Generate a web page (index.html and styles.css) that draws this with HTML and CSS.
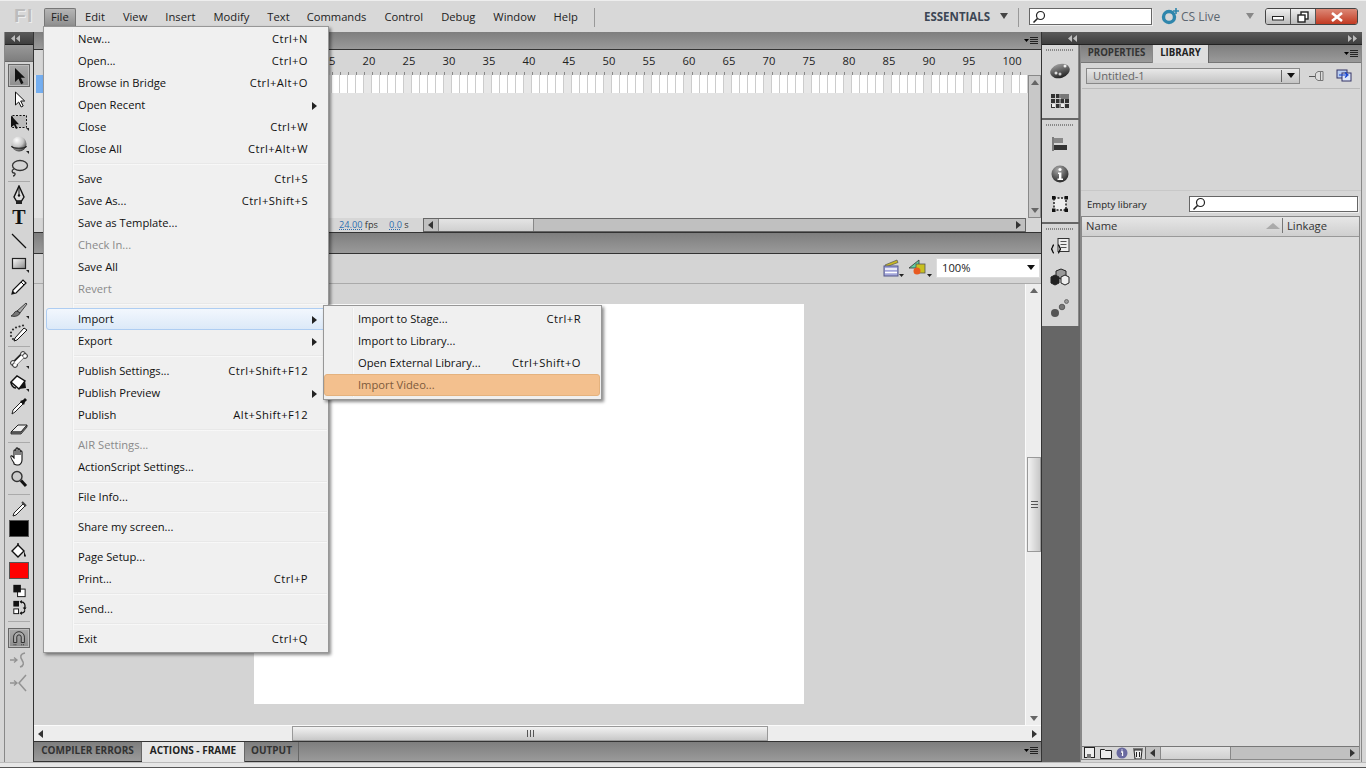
FILE: index.html
```html
<!DOCTYPE html>
<html lang="en">
<head>
<meta charset="utf-8">
<title>Adobe Flash Professional</title>
<link rel="stylesheet" href="styles.css">
</head>
<body>
<div class="app">
  <header class="appbar">
    <div class="logo">Fl</div>
    <nav class="mainmenu">
      <span class="mm mm-file open">File</span><span class="mm">Edit</span><span class="mm">View</span><span class="mm">Insert</span><span class="mm">Modify</span><span class="mm">Text</span><span class="mm mm-cmd">Commands</span><span class="mm">Control</span><span class="mm">Debug</span><span class="mm">Window</span><span class="mm">Help</span>
    </nav>
    <div class="vsep vsep-a"></div>
    <div class="essentials">ESSENTIALS</div>
    <div class="tri-down tri-ess"></div>
    <div class="vsep vsep-b"></div>
    <div class="searchbox topsearch">
      <svg class="lens" viewBox="0 0 14 14" width="14" height="14"><circle cx="8.500" cy="5.500" r="4" fill="none" stroke="#222" stroke-width="1.200"/><path d="M5.500 8.500 1.500 12.500" stroke="#222" stroke-width="1.600"/></svg>
    </div>
    <svg class="cslogo" viewBox="0 0 18 18" width="18" height="18"><circle cx="8" cy="10" r="5.500" fill="none" stroke="#2f86ac" stroke-width="3.400"/><path d="M15 1v6M12 4h6" stroke="#2f86ac" stroke-width="1.600"/></svg>
    <div class="cslive">CS Live</div>
    <div class="tri-down tri-cs"></div>
    <div class="winbtns">
      <div class="wb wb-min"><svg viewBox="0 0 12 8" width="12" height="8"><rect x="0.500" y="3.500" width="11" height="3.500" fill="#fff" stroke="#222"/></svg></div>
      <div class="wb wb-max"><svg viewBox="0 0 12 12" width="12" height="12"><rect x="4" y="1" width="7" height="7" fill="#fff" stroke="#222" stroke-width="1.400"/><rect x="1" y="4" width="7" height="7" fill="#fff" stroke="#222" stroke-width="1.400"/></svg></div>
      <div class="wb wb-close"><svg viewBox="0 0 14 10" width="14" height="10"><path d="M2 1 12 9M12 1 2 9" stroke="#fff" stroke-width="2.600"/></svg></div>
    </div>
  </header>

  <div class="workspace">
    <aside class="tools">
      <div class="dockhead"><svg class="chev" viewBox="0 0 9 7" width="9" height="7"><path d="M4 0v7L0 3.500zM9 0v7L5 3.500z"/></svg></div>
      <div class="toolgrip"></div>
      <div class="toollist">
        <div class="tool selected"><svg viewBox="0 0 20 20"><path d="M6 2v14l3.500-3.200 2.600 5.400 2.400-1.100-2.600-5.300H16z" fill="#111"/></svg></div>
        <div class="tool"><svg viewBox="0 0 20 20"><path d="M6.500 3v13l3.200-3 2.500 5 2-1-2.500-5h4z" fill="#fff" stroke="#111"/></svg></div>
        <div class="tool"><svg viewBox="0 0 20 20"><rect x="3.500" y="3.500" width="14" height="12" fill="#bbb" stroke="#111" stroke-dasharray="2 1.500"/><path d="M2 3.500v12l3-2.500 2 4 1.600-.8-2-4H10z" fill="#111"/><path d="M20 19v-3h-3z" fill="#222"/></svg></div>
        <div class="tool"><svg viewBox="0 0 20 20"><defs><radialGradient id="ball" cx="35%" cy="25%" r="80%"><stop offset="0" stop-color="#fff"/><stop offset=".55" stop-color="#c4c4c4"/><stop offset="1" stop-color="#3a3a3a"/></radialGradient></defs><circle cx="10" cy="9" r="7.500" fill="url(#ball)"/><path d="M2.500 11c1 3 14 3 15 0" fill="none" stroke="#222" stroke-width="1.100"/><path d="M20 19v-3h-3z" fill="#222"/></svg></div>
        <div class="tool"><svg viewBox="0 0 20 20"><ellipse cx="11" cy="7.500" rx="7.500" ry="5" fill="none" stroke="#333" stroke-width="1.300"/><path d="M5 11c-3 1-2 4 0 4s1 3-1 3" fill="none" stroke="#333" stroke-width="1.300"/></svg></div>
        <div class="toolsep"></div>
        <div class="tool"><svg viewBox="0 0 20 20"><path d="M10 1 15 12 12.500 16h-5L5 12z" fill="#ddd" stroke="#111" stroke-width="1.400"/><path d="M10 3v7" stroke="#111"/><circle cx="10" cy="10.500" r="1.200" fill="#111"/><rect x="7" y="16" width="6" height="3" fill="#222"/></svg></div>
        <div class="tool tool-t">T</div>
        <div class="tool"><svg viewBox="0 0 20 20"><path d="M3 3 17 17" stroke="#111" stroke-width="1.300"/></svg></div>
        <div class="tool"><svg viewBox="0 0 20 20"><defs><linearGradient id="rectg" x1="0" y1="0" x2="1" y2="1"><stop offset="0" stop-color="#fff"/><stop offset="1" stop-color="#888"/></linearGradient></defs><rect x="3.500" y="4.500" width="13" height="10" fill="url(#rectg)" stroke="#222" stroke-width="1.200"/><path d="M20 19v-3h-3z" fill="#222"/></svg></div>
        <div class="tool"><svg viewBox="0 0 20 20"><path d="M3 17 4 13 14 3l3 3L7 16z" fill="#fff" stroke="#111" stroke-width="1.200"/><path d="M12 5l3 3" stroke="#111"/><path d="M3 17l1-3 2 2z" fill="#111"/></svg></div>
        <div class="tool"><svg viewBox="0 0 20 20"><path d="M8 11 17 3l1 1-7 9z" fill="#aaa" stroke="#222" stroke-width=".8"/><path d="M8 11c-3 0-3 4-6 5 4 1 8 0 9-3z" fill="#777" stroke="#222" stroke-width=".8"/><path d="M20 19v-3h-3z" fill="#222"/></svg></div>
        <div class="tool"><svg viewBox="0 0 20 20"><path d="M6 15 15 5l3 2-10 10-3 1z" fill="#fff" stroke="#111"/><g fill="#333"><circle cx="2" cy="13" r="1.100"/><circle cx="2" cy="9.500" r="1.100"/><circle cx="4" cy="6.500" r="1.100"/><circle cx="7" cy="4.500" r="1.100"/><circle cx="10.500" cy="3.500" r="1.100"/><circle cx="14" cy="2.500" r="1.100"/><circle cx="4" cy="16" r="1.100"/></g></svg></div>
        <div class="toolsep"></div>
        <div class="tool"><svg viewBox="0 0 20 20"><path d="M13 6 6 13" stroke="#222" stroke-width="5.400"/><circle cx="14" cy="4" r="2.400" fill="#fff" stroke="#222"/><circle cx="16" cy="6" r="2.400" fill="#fff" stroke="#222"/><circle cx="4" cy="13" r="2.400" fill="#fff" stroke="#222"/><circle cx="6" cy="15" r="2.400" fill="#fff" stroke="#222"/><path d="M13.500 6.500 6.500 13.500" stroke="#fff" stroke-width="3.400"/><path d="M20 19v-3h-3z" fill="#222"/></svg></div>
        <div class="tool"><svg viewBox="0 0 20 20"><path d="M2 9 8 3l8 5-6 8z" fill="#fff" stroke="#111" stroke-width="1.400"/><path d="M10 16 16 8l1 7z" fill="#111"/><path d="M2 9c0 3 2 6 5 6" fill="none" stroke="#111" stroke-width="1.600"/><path d="M20 19v-3h-3z" fill="#222"/></svg></div>
        <div class="tool"><svg viewBox="0 0 20 20"><path d="M3 18 4 14 12 6l2 2-8 8z" fill="#fff" stroke="#222"/><path d="M11 5l4 4 1-3 2-2-2-2-2 2z" fill="#111"/></svg></div>
        <div class="tool"><svg viewBox="0 0 20 20"><path d="M2 13 9 6h9l-6 7z" fill="#eee" stroke="#222"/><path d="M2 13v2h10l6-7V6l-6 7z" fill="#777" stroke="#222" stroke-width=".8"/></svg></div>
        <div class="toolsep"></div>
        <div class="tool"><svg viewBox="0 0 20 20"><path d="M5 17C3 14 1 11 2 10s2 1 3 2V5c0-1.500 2-1.500 2 0v4-6c0-1.500 2-1.500 2 0v6-5c0-1.500 2-1.500 2 0v5-3c0-1.500 2-1.500 2 0v8c0 3-2 5-4 5H8c-1 0-2-.5-3-1z" fill="#fff" stroke="#111" stroke-width="1.100"/></svg></div>
        <div class="tool"><svg viewBox="0 0 20 20"><circle cx="8" cy="7.500" r="5" fill="#ccc" stroke="#333" stroke-width="1.400"/><path d="M12 11.500 17 17" stroke="#111" stroke-width="3"/></svg></div>
        <div class="toolsep toolsep-wide"></div>
        <div class="tool"><svg viewBox="0 0 20 20"><path d="M4 17 5 14 14 5l2 2-9 9z" fill="#fff" stroke="#222"/><path d="M13 3l4 4" stroke="#444" stroke-width="2"/></svg></div>
        <div class="swatch swatch-black"></div>
        <div class="tool tool-bucket"><svg viewBox="0 0 20 20"><path d="M3 10 9 4l6 6-6 6z" fill="#fff" stroke="#111" stroke-width="1.400"/><path d="M9 4V2" stroke="#111" stroke-width="1.400"/><path d="M15 10l2 5-1 1-1-1z" fill="#111"/></svg></div>
        <div class="swatch swatch-red"></div>
        <div class="tool tool-sm"><svg viewBox="0 0 20 18"><rect x="8.500" y="7.500" width="8" height="8" fill="#fff" stroke="#111"/><rect x="4" y="3" width="8" height="8" fill="#111"/></svg></div>
        <div class="tool tool-sm"><svg viewBox="0 0 20 18"><rect x="4" y="2" width="6" height="6" fill="#111"/><rect x="4.500" y="10.500" width="5" height="5" fill="#fff" stroke="#111"/><path d="M12 3c4 0 5 3 4 7M12 15c3 0 4-1 4-3" fill="none" stroke="#111" stroke-width="1.400"/><path d="M10.500 3 13 1v4zM10.500 15 13 13v4zM14 9h4l-2 3z" fill="#111"/></svg></div>
        <div class="toolsep toolsep-tall"></div>
        <div class="tool selected magnet"><svg viewBox="0 0 20 20"><path d="M4 15V9a6 6 0 0 1 12 0v6h-3.500V9a2.500 2.500 0 0 0-5 0v6z" fill="#aaa" stroke="#222"/><path d="M4 17.500h3.500M12.500 17.500H16" stroke="#222" stroke-dasharray="1 1"/></svg></div>
        <div class="tool dimmed"><svg viewBox="0 0 20 20"><path d="M1 10h7M5 7.500 8 10l-3 2.500" fill="none" stroke="#888" stroke-width="1.300"/><path d="M16 3c-5 1-5 4-3 7s2 6-2 7" fill="none" stroke="#888" stroke-width="1.500"/></svg></div>
        <div class="tool dimmed"><svg viewBox="0 0 20 20"><path d="M1 10h7M5 7.500 8 10l-3 2.500" fill="none" stroke="#888" stroke-width="1.300"/><path d="M17 2 10 10l7 8" fill="none" stroke="#888" stroke-width="1.500"/></svg></div>
      </div>
    </aside>

    <main class="center">
      <section class="timeline">
        <div class="graybar panelhead"><svg class="panelmenu" viewBox="0 0 14 9" width="14" height="9"><path d="M0 3h5L2.500 6z"/><path d="M6 1.500h8M6 3.500h8M6 5.500h8M6 7.500h8" stroke="#222"/></svg></div>
        <div class="ruler">
          <div class="ruler-labels">
            <span>15</span><span>20</span><span>25</span><span>30</span><span>35</span><span>40</span><span>45</span><span>50</span><span>55</span><span>60</span><span>65</span><span>70</span><span>75</span><span>80</span><span>85</span><span>90</span><span>95</span><span>100</span>
          </div>
          <div class="ruler-ticks"></div>
        </div>
        <div class="tl-body">
          <div class="tl-main">
            <div class="frames-row"><div class="layer-sel"></div><div class="frames"></div></div>
          </div>
          <div class="vscroll tl-vscroll"><i class="arrow-up"></i><i class="grow"></i><i class="arrow-dn"></i></div>
        </div>
        <div class="tl-status">
          <span class="fps"><u>24.00</u> fps</span><span class="secs"><u>0.0</u> s</span>
          <div class="tl-hscroll"><i class="arrow-l"></i><div class="tl-thumb"></div><i class="grow"></i><i class="arrow-r"></i></div>
        </div>
      </section>
      <div class="graybar splitbar"></div>
      <div class="editbar">
        <svg class="eb-scene" viewBox="0 0 22 18" width="22" height="18"><path d="M3 6 15 1l1 2.500L4 8z" fill="#c8b820" stroke="#555" stroke-width=".7"/><rect x="2" y="7" width="14" height="10" fill="#a3a6da" stroke="#55588a"/><path d="M3 10h12M3 13.500h12" stroke="#fff" stroke-width="1.300"/><path d="M17 15h5l-2.500 3z" fill="#222"/></svg>
        <svg class="eb-sym" viewBox="0 0 24 18" width="24" height="18"><path d="M1 9 11 1v8z" fill="#5fd0a0" stroke="#333" stroke-width=".8"/><rect x="8" y="5" width="9" height="9" fill="#c8c020" stroke="#555" stroke-width=".8"/><circle cx="9" cy="12" r="3.500" fill="#e85a20"/><path d="M19 15h5l-2.500 3z" fill="#222"/></svg>
        <div class="zoombox"><span>100%</span><i class="tri-zoom"></i></div>
      </div>
      <div class="canvas-row">
        <div class="canvas"><div class="stage"></div></div>
        <div class="vscroll main-vscroll">
          <i class="arrow-up"></i>
          <div class="vthumb"><span class="grip"></span></div>
          <i class="grow"></i>
          <i class="arrow-dn"></i>
        </div>
      </div>
      <div class="hscroll">
        <i class="arrow-l"></i>
        <div class="hthumb"><span class="hgrip"></span></div>
        <i class="grow"></i>
        <i class="arrow-r"></i>
      </div>
      <div class="graybar tabs">
        <span class="tab tab-a">COMPILER ERRORS</span><span class="tab active tab-b">ACTIONS - FRAME</span><span class="tab tab-c">OUTPUT</span>
        <svg class="panelmenu" viewBox="0 0 14 9" width="14" height="9"><path d="M0 3h5L2.500 6z"/><path d="M6 1.500h8M6 3.500h8M6 5.500h8M6 7.500h8" stroke="#222"/></svg>
      </div>
    </main>

    <aside class="dock">
      <div class="dockhead dockhead-r"><svg class="chev" viewBox="0 0 9 7" width="9" height="7"><path d="M4 0v7L0 3.500zM9 0v7L5 3.500z"/></svg><svg class="chev" viewBox="0 0 9 7" width="9" height="7"><path d="M0 0v7l4-3.500zM5 0v7l4-3.500z"/></svg></div>
      <div class="dock-body">
        <div class="iconcol">
          <div class="icongroup g1">
            <div class="grip-dots"></div>
            <svg viewBox="0 0 22 18" width="22" height="18"><defs><linearGradient id="metal" x1="0" y1="0" x2="0" y2="1"><stop offset="0" stop-color="#999"/><stop offset="1" stop-color="#222"/></linearGradient></defs><ellipse cx="11" cy="9" rx="10" ry="7" transform="rotate(-18 11 9)" fill="url(#metal)"/><circle cx="7" cy="11" r="1.500" fill="#ddd"/><circle cx="11" cy="12" r="1.500" fill="#ccc"/><circle cx="16" cy="4" r="1.500" fill="#eee"/></svg>
            <svg viewBox="0 0 18 14" width="18" height="14"><rect width="18" height="14" fill="#333"/><path d="M0 4.500h18M0 9.500h18M4.500 0v14M9 0v14M13.500 0v14" stroke="#ccc"/><rect x="10" y="0" width="8" height="5" fill="#777"/><rect x="1" y="10" width="3" height="3" fill="#eee"/><rect x="10" y="10" width="3" height="3" fill="#eee"/></svg>
          </div>
          <div class="icongroup g2">
            <div class="grip-dots"></div>
            <svg viewBox="0 0 16 16" width="16" height="16"><path d="M1 1v14" stroke="#222"/><rect x="2" y="2" width="9" height="5" fill="#888"/><rect x="2" y="9" width="13" height="5" fill="#333"/></svg>
            <svg viewBox="0 0 18 18" width="18" height="18"><defs><radialGradient id="infog" cx="40%" cy="25%" r="80%"><stop offset="0" stop-color="#aaa"/><stop offset="1" stop-color="#222"/></radialGradient></defs><circle cx="9" cy="9" r="8.500" fill="url(#infog)"/><circle cx="9" cy="4.500" r="1.600" fill="#fff"/><path d="M7 7.500h3.400v6H12V15H6.500v-1.500H8V9H7z" fill="#fff"/></svg>
            <svg viewBox="0 0 16 16" width="16" height="16"><rect x="2" y="2" width="12" height="12" fill="#eee" stroke="#222" stroke-dasharray="2 1.500" stroke-width="1.500"/><g fill="#111"><rect x="0" y="0" width="3.500" height="3.500"/><rect x="12.500" y="0" width="3.500" height="3.500"/><rect x="0" y="12.500" width="3.500" height="3.500"/><rect x="12.500" y="12.500" width="3.500" height="3.500"/></g></svg>
          </div>
          <div class="icongroup g3">
            <div class="grip-dots"></div>
            <svg viewBox="0 0 20 18" width="20" height="18"><rect x="8" y="0.500" width="11" height="13" fill="#eee" stroke="#333"/><path d="M10.500 3.500h6M10.500 6.500h6M10.500 9.500h6" stroke="#555"/><path d="M4 7c-2 0-1 4-3 4 2 0 1 4 3 4M8 7c2 0 1 4 3 4-2 0-1 4-3 4" fill="none" stroke="#111" stroke-width="1.300"/></svg>
            <svg viewBox="0 0 20 18" width="20" height="18"><path d="M6 3l5-2 5 2v6l-5 2-5-2z" fill="#999" stroke="#222"/><path d="M1 9l4-2 4 2v6l-4 2-4-2z" fill="#222" stroke="#222"/><path d="M11 9l4-2 4 2v6l-4 2-4-2z" fill="#eee" stroke="#222"/></svg>
            <svg viewBox="0 0 20 20" width="20" height="20"><circle cx="5" cy="15" r="4" fill="#555"/><circle cx="12" cy="9" r="2.800" fill="#777" stroke="#444" stroke-width=".7"/><circle cx="16.500" cy="3.500" r="2" fill="#999" stroke="#555" stroke-width=".7"/></svg>
          </div>
        </div>
        <section class="library">
          <div class="graybar libtabs">
            <span class="ltab ltab-a">PROPERTIES</span><span class="ltab active">LIBRARY</span>
            <svg class="panelmenu" viewBox="0 0 14 9" width="14" height="9"><path d="M0 3h5L2.500 6z"/><path d="M6 1.500h8M6 3.500h8M6 5.500h8M6 7.500h8" stroke="#222"/></svg>
          </div>
          <div class="docrow">
            <div class="docselect"><span class="docname">Untitled-1</span><span class="docarrow"><i class="tri-zoom"></i></span></div>
            <svg viewBox="0 0 16 12" width="16" height="12"><path d="M0 6.500h6" stroke="#555"/><path d="M6.500 3.500 9 1.500h5v9H9l-2.500-2z" fill="#ddd" stroke="#777"/><path d="M11.500 2v8" stroke="#777"/></svg>
            <svg viewBox="0 0 16 13" width="16" height="13"><rect x="1" y="1" width="10" height="8" fill="#b8cdf0" stroke="#336"/><rect x="6" y="4" width="9" height="8" fill="#dfe8f8" stroke="#336"/><path d="M3 6h8M9 3.500 12 6 9 8.500" stroke="#1040d0" stroke-width="1.200" fill="none"/></svg>
          </div>
          <div class="preview"></div>
          <div class="libsearch">
            <span class="emptylib">Empty library</span>
            <div class="searchbox lsearch">
              <svg class="lens" viewBox="0 0 14 14" width="14" height="14"><circle cx="8.500" cy="5.500" r="4" fill="none" stroke="#222" stroke-width="1.200"/><path d="M5.500 8.500 1.500 12.500" stroke="#222" stroke-width="1.600"/></svg>
            </div>
          </div>
          <div class="libtable">
            <div class="libhead"><span class="col-name">Name</span><i class="sorttri"></i><span class="col-link">Linkage</span></div>
            <div class="liblist"></div>
            <div class="libfoot">
              <svg viewBox="0 0 12 12" width="12" height="12"><rect x=".5" y=".5" width="10" height="10" fill="#eee" stroke="#222"/><path d="M3 7h4v4H3z" fill="#777"/></svg>
              <svg viewBox="0 0 12 12" width="12" height="12"><path d="M.5 2.500h4l1 1h6v8H.500z" fill="#eee" stroke="#222"/></svg>
              <svg viewBox="0 0 12 12" width="12" height="12"><circle cx="6" cy="6" r="5.500" fill="#6a6aa0"/><path d="M6 2.500v1M5 5h1.500v4" stroke="#fff" stroke-width="1.300"/></svg>
              <svg viewBox="0 0 12 12" width="12" height="12"><path d="M2 3h8l-1 9H3z" fill="#eee" stroke="#222"/><path d="M1 2h10M4.500 5v5M7.500 5v5" stroke="#222"/></svg>
              <div class="lib-hscroll"><i class="arrow-l"></i><div class="lib-thumb"></div><i class="grow"></i><i class="arrow-r"></i></div>
            </div>
          </div>
        </section>
      </div>
    </aside>
  </div>
  <div class="bottomstrip"></div>
</div>

<div class="menu filemenu">
  <div class="mi"><span>New...</span><kbd>Ctrl+N</kbd></div>
  <div class="mi"><span>Open...</span><kbd>Ctrl+O</kbd></div>
  <div class="mi"><span>Browse in Bridge</span><kbd>Ctrl+Alt+O</kbd></div>
  <div class="mi sub"><span>Open Recent</span></div>
  <div class="mi"><span>Close</span><kbd>Ctrl+W</kbd></div>
  <div class="mi"><span>Close All</span><kbd>Ctrl+Alt+W</kbd></div>
  <div class="msep"></div>
  <div class="mi"><span>Save</span><kbd>Ctrl+S</kbd></div>
  <div class="mi"><span>Save As...</span><kbd>Ctrl+Shift+S</kbd></div>
  <div class="mi"><span>Save as Template...</span></div>
  <div class="mi off"><span>Check In...</span></div>
  <div class="mi"><span>Save All</span></div>
  <div class="mi off"><span>Revert</span></div>
  <div class="msep"></div>
  <div class="mi sub hot"><span>Import</span></div>
  <div class="mi sub"><span>Export</span></div>
  <div class="msep"></div>
  <div class="mi"><span>Publish Settings...</span><kbd>Ctrl+Shift+F12</kbd></div>
  <div class="mi sub"><span>Publish Preview</span></div>
  <div class="mi"><span>Publish</span><kbd>Alt+Shift+F12</kbd></div>
  <div class="msep"></div>
  <div class="mi off"><span>AIR Settings...</span></div>
  <div class="mi"><span>ActionScript Settings...</span></div>
  <div class="msep"></div>
  <div class="mi"><span>File Info...</span></div>
  <div class="msep"></div>
  <div class="mi"><span>Share my screen...</span></div>
  <div class="msep"></div>
  <div class="mi"><span>Page Setup...</span></div>
  <div class="mi"><span>Print...</span><kbd>Ctrl+P</kbd></div>
  <div class="msep"></div>
  <div class="mi"><span>Send...</span></div>
  <div class="msep"></div>
  <div class="mi"><span>Exit</span><kbd>Ctrl+Q</kbd></div>
</div>

<div class="menu submenu">
  <div class="mi"><span>Import to Stage...</span><kbd>Ctrl+R</kbd></div>
  <div class="mi"><span>Import to Library...</span></div>
  <div class="mi"><span>Open External Library...</span><kbd>Ctrl+Shift+O</kbd></div>
  <div class="mi orange"><span>Import Video...</span></div>
</div>
</body>
</html>
```

FILE: styles.css
```css
* { box-sizing: border-box; }
html, body { margin: 0; padding: 0; }
body {
  width: 1366px; height: 768px; overflow: hidden; background: #d6d6d6;
  font-family: "Open Sans", "Noto Sans", "Liberation Sans", sans-serif;
  font-size: 11.2px; color: #1a1a1a; position: relative;
}
i { display: block; }
.app { display: flex; flex-direction: column; height: 768px; }

/* app bar */
.appbar { height: 32px; flex: none; position: relative; background: #d8d8d8; border-top: 1px solid #eee; }
.logo { position: absolute; left: 14px; top: 4px; font: bold 19px/22px "Liberation Sans", sans-serif; color: #bcbcbc; letter-spacing: 1.500px; text-shadow: 1px 1px 0 #eee; }
.mainmenu { position: absolute; left: 44px; top: 7px; height: 18px; display: flex; line-height: 17px; }
.mm { display: block; padding: 0 9px; color: #222; font-size: 11.200px; }
.mm-cmd { margin-left: -1px; }
.open { width: 32px; background: linear-gradient(#b6b6b6, #8e8e8e); border: 1px solid #777; border-bottom: 0; border-radius: 2px 2px 0 0; line-height: 16px; padding: 0 6px; }
.vsep { position: absolute; top: 7px; width: 1px; height: 19px; background: #999; }
.vsep-a { left: 594px; }
.vsep-b { left: 1018px; }
.essentials { position: absolute; left: 924px; top: 6px; font: bold 11.500px/19px "Open Sans", sans-serif; color: #3c4654; }
.tri-down { position: absolute; width: 0; height: 0; border-left: 4px solid transparent; border-right: 4px solid transparent; border-top: 6px solid #444; }
.tri-ess { left: 1000px; top: 12px; }
.tri-cs { left: 1246px; top: 12px; border-top-color: #888; }
.searchbox { background: #fff; border: 1px solid #666; box-shadow: 1px 1px 0 #eee; display: flex; align-items: center; padding-left: 2px; }
.topsearch { position: absolute; left: 1029px; top: 7px; width: 123px; height: 17px; }
.cslogo { position: absolute; left: 1161px; top: 6px; }
.cslive { position: absolute; left: 1181px; top: 6px; font-size: 12px; line-height: 20px; color: #5c6670; }
.winbtns { position: absolute; left: 1265px; top: 7px; width: 93px; height: 17px; display: flex; border: 1px solid #444; border-radius: 3px; overflow: hidden; }
.wb { display: flex; align-items: center; justify-content: center; background: linear-gradient(#eee, #bbb); }
.wb-min { width: 25px; border-right: 1px solid #555; }
.wb-max { width: 25px; border-right: 1px solid #555; }
.wb-close { flex: 1; background: linear-gradient(#dc8876, #c23a22); }

/* workspace */
.workspace { display: flex; height: 730px; flex: none; padding-left: 4px; padding-right: 4px; }
.dockhead { height: 13px; flex: none; background: linear-gradient(#5a5a5a, #3e3e3e); border-bottom: 1px solid #222; display: flex; justify-content: space-between; align-items: center; padding: 0 6px; }
.chev { fill: #bdbdbd; display: block; }

/* tool column */
.tools { width: 30px; flex: none; background: #d4d4d4; border-left: 1px solid #888; border-right: 1px solid #333; display: flex; flex-direction: column; }
.toolgrip { height: 17px; margin: 0 0 2px; background: linear-gradient(#999, #7e7e7e); border-bottom: 1px solid #666; flex: none; }
.toollist { display: flex; flex-direction: column; }
.tool { height: 23px; display: flex; align-items: center; justify-content: center; flex: none; }
.tool svg { width: 20px; height: 20px; display: block; }
.tool-sm { height: 17px; }
.tool-sm svg { height: 17px; }
.tool-t { font: bold 20px/23px "Liberation Serif", serif; color: #111; }
.tool-bucket { margin-top: 2px; height: 23px; }
.tool.selected { margin: 0 3px; height: 23px; background: linear-gradient(#aaa, #8e8e8e); border: 1px solid #666; box-shadow: inset 0 0 0 1px #bbb; }
.toollist .magnet { height: 20px; margin: 0 3px; }
.toollist .magnet svg { width: 18px; height: 18px; }
.dimmed { opacity: .85; }
.toolsep { height: 4px; flex: none; position: relative; }
.toolsep::after { content: ""; position: absolute; left: 3px; right: 3px; top: 2px; height: 1px; background: #aaa; }
.toolsep-wide { height: 7px; }
.toolsep-wide::after { top: 4px; }
.toolsep-tall { height: 12px; }
.toolsep-tall::after { top: 5px; }
.swatch { width: 20px; height: 17px; margin: 0 0 0 4px; border: 1px solid #555; flex: none; }
.swatch-black { background: #000; }
.swatch-red { background: #f00; margin-bottom: 3px; }

/* center */
.center { width: 1008px; flex: none; display: flex; flex-direction: column; border-right: 1px solid #333; }
.graybar { background: linear-gradient(#7e7e7e, #9a9a9a); flex: none; }
.panelhead { height: 18px; border-bottom: 1px solid #333; position: relative; }
.panelmenu { position: absolute; right: 3px; top: 4px; display: block; }
.timeline { height: 201px; flex: none; display: flex; flex-direction: column; background: #e3e3e3; }
.ruler { height: 25px; flex: none; background: #d6d6d6; position: relative; overflow: hidden; }
.ruler-labels { display: flex; padding-left: 275px; padding-top: 3px; }
.ruler-labels span { width: 40px; flex: none; text-align: center; font-size: 11.200px; line-height: 16px; color: #222; }
.ruler-labels span:last-child { margin-left: 3px; }
.ruler-ticks { position: absolute; left: 170px; right: 14px; bottom: 0; height: 3px; background: repeating-linear-gradient(90deg, #888 0 1px, transparent 1px 8px); }
.tl-body { height: 143px; flex: none; display: flex; }
.tl-main { flex: 1; background: #e3e3e3; }
.frames-row { height: 18px; display: flex; position: relative; }
.layer-sel { width: 8px; margin-left: 2px; background: #74aef0; }
.frames { margin-left: 160px; flex: 1; background: repeating-linear-gradient(90deg, #e8e8e8 0 7px, #ccc 7px 8px, #fff 8px 15px, #ccc 15px 16px, #fff 16px 23px, #ccc 23px 24px, #fff 24px 31px, #ccc 31px 32px, #fff 32px 39px, #ccc 39px 40px); }
.vscroll { display: flex; flex-direction: column; background: #ededed; flex: none; }
.tl-vscroll { width: 13px; background: #c8c8c8; border: 1px solid #888; }
.arrow-up { flex: none; height: 13px; position: relative; }
.arrow-up::after { content: ""; position: absolute; left: 50%; margin-left: -4px; top: 4px; border: 4px solid transparent; border-top: 0; border-bottom: 5px solid #666; }
.arrow-dn { flex: none; height: 13px; position: relative; }
.arrow-dn::after { content: ""; position: absolute; left: 50%; margin-left: -4px; top: 4px; border: 4px solid transparent; border-bottom: 0; border-top: 5px solid #666; }
.arrow-l { flex: none; width: 14px; position: relative; }
.arrow-l::after { content: ""; position: absolute; top: 50%; margin-top: -4px; left: 4px; border: 4px solid transparent; border-left: 0; border-right: 5px solid #333; }
.arrow-r { flex: none; width: 14px; position: relative; }
.arrow-r::after { content: ""; position: absolute; top: 50%; margin-top: -4px; right: 4px; border: 4px solid transparent; border-right: 0; border-left: 5px solid #333; }
.grow { flex: 1; }
.tl-status { height: 15px; flex: none; display: flex; align-items: center; background: #d6d6d6; border-bottom: 1px solid #333; position: relative; }
.fps { position: absolute; left: 305px; top: 0; font-size: 9.200px; line-height: 14px; color: #333; }
.secs { position: absolute; left: 355px; top: 0; font-size: 9.200px; line-height: 14px; color: #333; }
.fps u, .secs u { color: #2f6fb0; text-decoration: underline dotted; }
.tl-hscroll { position: absolute; left: 389px; right: 15px; top: 0; height: 14px; display: flex; background: #c0c0c0; border: 1px solid #666; }
.tl-thumb { width: 96px; background: linear-gradient(#e4e4e4, #d0d0d0); border-left: 1px solid #888; border-right: 1px solid #888; }
.splitbar { height: 21px; border-bottom: 1px solid #333; }
.editbar { height: 30px; flex: none; background: #d4d4d4; border-bottom: 1px solid #aaa; display: flex; align-items: center; justify-content: flex-end; position: relative; padding-bottom: 2px; }
.eb-scene { margin-right: 4px; }
.eb-sym { margin-right: 4px; }
.zoombox { width: 104px; height: 20px; margin-right: 1px; background: #fff; border: 1px solid #ddd; display: flex; align-items: center; justify-content: space-between; padding: 0 4px 1px 5px; font-size: 11.200px; color: #222; }
.tri-zoom { width: 0; height: 0; border-left: 4px solid transparent; border-right: 4px solid transparent; border-top: 5px solid #111; }
.canvas-row { height: 441px; flex: none; display: flex; }
.canvas { flex: 1; background: #d4d4d4; padding: 20px 0 0 220px; }
.stage { width: 550px; height: 400px; background: #fff; }
.main-vscroll { width: 16px; border-left: 1px solid #fafafa; }
.vthumb { height: 95px; margin: 160px 0 0 1px; width: 14px; background: linear-gradient(90deg, #f2f2f2, #c8c8c8); border: 1px solid #999; display: flex; align-items: center; justify-content: center; flex: none; }
.grip { display: block; width: 7px; height: 7px; background: repeating-linear-gradient(#555 0 1px, transparent 1px 3px); }
.hscroll { height: 16px; flex: none; background: #ededed; display: flex; border-top: 1px solid #fafafa; }
.hthumb { width: 476px; margin-left: 244px; background: linear-gradient(#f2f2f2, #c8c8c8); border: 1px solid #999; display: flex; align-items: center; justify-content: center; flex: none; }
.hgrip { display: block; width: 7px; height: 7px; background: repeating-linear-gradient(90deg, #555 0 1px, transparent 1px 3px); }
.tabs { height: 21px; display: flex; position: relative; border-top: 1px solid #333; border-bottom: 1px solid #333; }
.tab { font: bold 10px/17px "Open Sans", sans-serif; color: #333; border-right: 1px solid #666; text-align: center; }
.tab-a { width: 108px; }
.tab-b { width: 103px; }
.tab-c { width: 54px; }
.tab.active { background: #e6e6e6; color: #222; height: 20px; }

/* dock */
.dock { flex: 1; display: flex; flex-direction: column; background: #666; min-width: 0; }
.dockhead-r { padding: 0 5px 0 26px; }
.dock-body { flex: 1; display: flex; min-height: 0; }
.iconcol { width: 37px; flex: none; display: flex; flex-direction: column; gap: 2px; }
.icongroup { background: #d6d6d6; display: flex; flex-direction: column; align-items: center; border-right: 1px solid #888; flex: none; padding-top: 4px; }
.g1 { height: 73px; gap: 14px; }
.g2 { height: 102px; gap: 13px; }
.g3 { height: 102px; gap: 12px; }
.grip-dots { width: 28px; height: 2px; background: repeating-linear-gradient(90deg, #888 0 1px, transparent 1px 2px); margin-bottom: -3px; }
.g3 .grip-dots { margin-bottom: -4px; }
.library { flex: 1; background: #d6d6d6; border-left: 1px solid #888; border-right: 1px solid #888; display: flex; flex-direction: column; min-width: 0; margin-left: 1px; }
.libtabs { height: 18px; display: flex; position: relative; border-bottom: 1px solid #777; }
.ltab { font: bold 9.700px/16px "Open Sans", sans-serif; color: #333; text-align: center; }
.ltab-a { width: 71px; }
.ltab.active { width: 57px; background: #dedede; height: 18px; border-right: 1px solid #666; border-left: 1px solid #888; color: #222; }
.docrow { height: 26px; display: flex; align-items: center; gap: 11px; padding-left: 4px; border-bottom: 1px solid #bbb; flex: none; margin: 0 1px; }
.docselect { width: 214px; height: 16px; margin-right: -2px; background: linear-gradient(#e8e8e8, #c4c4c4); border: 1px solid #888; display: flex; justify-content: space-between; padding-left: 6px; }
.docname { color: #666; line-height: 14px; font-size: 11.200px; }
.docarrow { width: 18px; border-left: 1px solid #666; display: flex; align-items: center; justify-content: center; margin: 1px 0; }
.preview { height: 102px; flex: none; border-bottom: 1px solid #c8c8c8; }
.libsearch { height: 25px; padding-top: 1px; display: flex; align-items: center; flex: none; padding-left: 6px; }
.emptylib { width: 102px; font-size: 9.600px; color: #222; flex: none; }
.lsearch { width: 169px; height: 16px; }
.libtable { flex: 1; display: flex; flex-direction: column; border: 1px solid #888; margin: 0 1px 2px 0; min-height: 0; background: #dcdcdc; }
.libhead { height: 20px; flex: none; display: flex; align-items: center; background: linear-gradient(#e6e6e6, #cfcfcf); border-bottom: 1px solid #999; position: relative; padding: 0 0 2px 4px; }
.col-name { flex: 1; font-size: 11.200px; color: #333; }
.sorttri { width: 0; height: 0; border-left: 7px solid transparent; border-right: 7px solid transparent; border-bottom: 6px solid #aaa; margin-right: 2px; }
.col-link { width: 77px; border-left: 1px solid #777; padding-left: 4px; font-size: 11.200px; color: #333; }
.liblist { flex: 1; background: #dcdcdc; }
.libfoot { height: 13px; flex: none; display: flex; align-items: center; gap: 4px; padding-left: 2px; background: #d6d6d6; border-top: 1px solid #777; }
.lib-hscroll { flex: 1; height: 12px; display: flex; background: #c0c0c0; border-left: 1px solid #666; margin-left: -3px; }
.lib-thumb { width: 71px; background: linear-gradient(#e4e4e4, #d0d0d0); border-left: 1px solid #888; border-right: 1px solid #888; }
.bottomstrip { flex: 1; background: #e6e6e6; border-top: 1px solid #bbb; border-bottom: 1px solid #555; }

/* menus */
.menu { position: absolute; background: #f0f0f0; border: 1px solid #979797; box-shadow: 2px 2px 3px rgba(0,0,0,.45); padding: 1px 0 1px 2px; }
.menu::before { content: ""; position: absolute; top: 2px; bottom: 2px; width: 2px; background: linear-gradient(90deg, #e2e3e3, #fff); }
.filemenu { left: 43px; top: 26px; width: 286px; height: 627px; }
.filemenu::before { left: 28px; }
.submenu { left: 323px; top: 305px; width: 279px; height: 95px; padding-top: 2px; }
.submenu::before { left: 28px; }
.mi { height: 22px; display: flex; justify-content: space-between; align-items: center; font-size: 11.200px; color: #111; position: relative; border: 1px solid transparent; border-radius: 3px; }
.filemenu .mi { padding: 0 19px 2px 31px; }
.submenu .mi { padding: 0 19px 2px 31px; }
.mi kbd { font: inherit; letter-spacing: .45px; }
.mi.off { color: #8a8a8a; }
.mi.sub::after { content: ""; position: absolute; right: 10px; top: 7px; border: 4px solid transparent; border-right: 0; border-left: 5px solid #222; }
.hot { background: linear-gradient(#f2f7fd, #dce9f8); border-color: #aecdf2; }
.submenu .orange { background: #f3c08e; border-color: #e4b27e; color: #7d5a3c; margin: 0 1px 0 -2px; padding-left: 33px; }
.msep { height: 8px; position: relative; }
.msep::after { content: ""; position: absolute; left: 28px; right: 1px; top: 3px; height: 2px; background: linear-gradient(#e0e0e0, #fff); }
```
